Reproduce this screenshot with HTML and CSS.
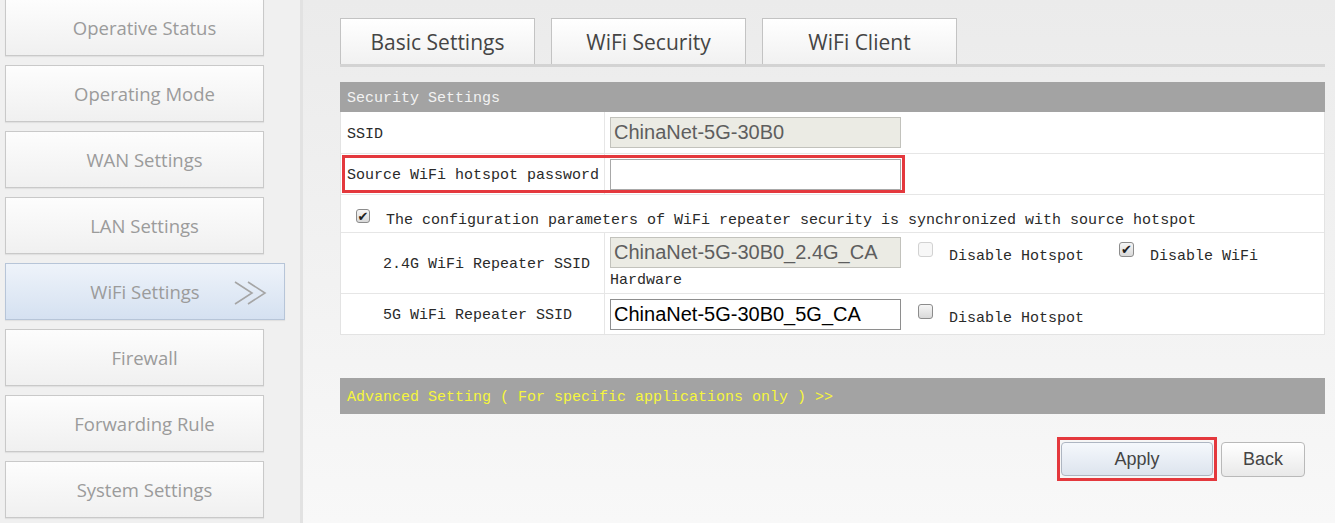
FILE: index.html
```html
<!DOCTYPE html>
<html lang="en">
<head>
  <meta charset="UTF-8">
  <meta name="viewport" content="width=device-width, initial-scale=1.0">
  <title>WiFi Settings</title>
  <link rel="stylesheet" href="styles.css">
</head>
<body>
  <div class="page">
    <!-- Side menu -->
    <nav class="sidebar">
      <a class="nav-item first">Operative Status</a>
      <a class="nav-item">Operating Mode</a>
      <a class="nav-item">WAN Settings</a>
      <a class="nav-item">LAN Settings</a>
      <a class="nav-item active">WiFi Settings
        <svg class="nav-arrow" width="36" height="26" viewBox="0 0 36 26">
          <polyline points="2,2 19,13 2,24" fill="none" stroke="#a5a5a5" stroke-width="1.6"/>
          <polyline points="15,2 32,13 15,24" fill="none" stroke="#a5a5a5" stroke-width="1.6"/>
        </svg>
      </a>
      <a class="nav-item">Firewall</a>
      <a class="nav-item">Forwarding Rule</a>
      <a class="nav-item">System Settings</a>
    </nav>

    <main class="main">
      <!-- Tabs -->
      <div class="tabs">
        <button class="tab">Basic Settings</button>
        <button class="tab">WiFi Security</button>
        <button class="tab">WiFi Client</button>
      </div>

      <div class="section-head">Security Settings</div>
      <div class="form-table">
        <div class="row r-ssid">
          <div class="label">SSID</div>
          <div class="value">
            <input class="field disabled" type="text" value="ChinaNet-5G-30B0" disabled>
          </div>
        </div>
        <div class="row r-pass">
          <div class="label">Source WiFi hotspot password</div>
          <div class="value">
            <input class="field" type="password" value="">
          </div>
          <div class="mark-box"></div>
        </div>
        <div class="row r-sync">
          <span class="check on"></span>
          <span class="text">The configuration parameters of WiFi repeater security is synchronized with source hotspot</span>
        </div>
        <div class="row r-24">
          <div class="label indent">2.4G WiFi Repeater SSID</div>
          <div class="value stack">
            <div class="line">
              <input class="field disabled" type="text" value="ChinaNet-5G-30B0_2.4G_CA" disabled>
              <span class="opt"><span class="check off-dis"></span><span class="text">Disable Hotspot</span></span>
              <span class="opt wide"><span class="check on"></span><span class="text">Disable WiFi</span></span>
            </div>
            <div class="note">Hardware</div>
          </div>
        </div>
        <div class="row r-5g">
          <div class="label indent">5G WiFi Repeater SSID</div>
          <div class="value">
            <div class="line">
              <input class="field dark" type="text" value="ChinaNet-5G-30B0_5G_CA">
              <span class="opt"><span class="check off"></span><span class="text">Disable Hotspot</span></span>
            </div>
          </div>
        </div>
      </div>

      <div class="section-head advanced">Advanced Setting ( For specific applications only ) &gt;&gt;</div>

      <div class="actions">
        <span class="mark-wrap"><button class="btn primary">Apply</button></span>
        <button class="btn">Back</button>
      </div>
    </main>
  </div>
</body>
</html>
```

FILE: styles.css
```css
* {
  box-sizing: border-box;
}

body {
  margin: 0;
  width: 1335px;
  height: 523px;
  overflow: hidden;
  background: #f0f0f0;
  font-family: "Liberation Mono", monospace;
}

.page {
  display: flex;
  height: 523px;
}

/* Side menu */
.sidebar {
  width: 303px;
  flex-shrink: 0;
  padding-left: 5px;
  background: #f0f0f0;
  border-right: 3px solid #e2e2e2;
  display: flex;
  flex-direction: column;
  gap: 9px;
}

.nav-item {
  position: relative;
  display: flex;
  align-items: center;
  justify-content: center;
  width: 259px;
  height: 57px;
  flex-shrink: 0;
  padding-left: 20px;
  background: linear-gradient(#fdfdfd, #f0f0f0);
  border: 1px solid #c9c9c9;
  box-shadow: 0 1px 1px rgba(0, 0, 0, 0.06);
  font-family: "Open Sans", sans-serif;
  font-size: 18.5px;
  color: #9b9b9b;
}

.nav-item.first {
  margin-top: -1px;
}

.nav-item.active {
  width: 280px;
  padding-right: 20px;
  background: linear-gradient(#eef3fa, #d5e1f1);
  border-color: #b7c5d8;
}

.nav-arrow {
  position: absolute;
  right: 15px;
  top: 16px;
}

/* Main panel */
.main {
  flex: 1;
  padding: 18px 10px 0 37px;
  background: linear-gradient(#ebebeb, #f8f8f8);
}

.tabs {
  display: flex;
  gap: 16px;
  border-bottom: 3px solid #d3d3d3;
}

.tab {
  width: 195px;
  height: 46px;
  background: linear-gradient(#ffffff, #f1f1f1);
  border: 1px solid #c3c3c3;
  border-bottom: none;
  font-family: "Open Sans", sans-serif;
  font-size: 21px;
  color: #454545;
  padding: 0;
}

.section-head {
  height: 30px;
  margin-top: 15px;
  padding-left: 7px;
  line-height: 34px;
  background: #a3a3a3;
  color: #f2f2f2;
  font-size: 15px;
}

.section-head.advanced {
  height: 36px;
  line-height: 40px;
  margin-top: 43px;
  color: #f6f63c;
}

.form-table {
  background: #ffffff;
  border: 1px solid #e3e3e3;
  border-top: none;
}

.row {
  position: relative;
  display: flex;
  border-bottom: 1px solid #e6e6e6;
  font-size: 15px;
  color: #2a2a2a;
}

.row:last-child {
  border-bottom: none;
}

.r-ssid { height: 42px; }
.r-pass { height: 41px; }
.r-sync { height: 38px; align-items: center; padding: 5px 0 0 15px; }
.r-24 { height: 61px; }
.r-5g { height: 40px; }

.r-sync .text {
  padding-top: 8px;
}

.label {
  width: 264px;
  flex-shrink: 0;
  display: flex;
  align-items: center;
  padding: 3px 0 0 6px;
  border-right: 1px solid #e6e6e6;
  white-space: nowrap;
}

.label.indent {
  padding-left: 42px;
}

.value {
  flex: 1;
  display: flex;
  align-items: center;
  padding-left: 5px;
}

.value.stack {
  flex-direction: column;
  align-items: flex-start;
  padding-top: 4px;
}

.line {
  display: flex;
  align-items: center;
}

.note {
  margin-top: 4px;
  line-height: 18px;
}

.field {
  width: 291px;
  height: 31px;
  padding: 0 3px;
  border: 1px solid #a8a8a8;
  background: #ffffff;
  font-family: "Liberation Sans", Arial, sans-serif;
  font-size: 20px;
  color: #000000;
  outline: none;
}

.field.disabled {
  background: #ebebe4;
  border-color: #c2c2bc;
  color: #5e5e5e;
}

.field.dark {
  border-color: #8e8e8e;
}

.opt {
  display: flex;
  align-items: center;
  margin-left: 17px;
  white-space: nowrap;
}

.opt.wide {
  margin-left: 35px;
}

.opt .check {
  margin-right: 16px;
  margin-bottom: 6px;
}

.opt .text {
  padding-top: 8px;
}

.check {
  display: inline-flex;
  align-items: center;
  justify-content: center;
  flex-shrink: 0;
  width: 15px;
  height: 15px;
  border: 1px solid #8c8c8c;
  border-radius: 3px;
  background: linear-gradient(#f6f6f6, #d9d9d9);
  font-family: "DejaVu Sans", sans-serif;
  font-size: 13px;
  font-weight: bold;
  line-height: 1;
  color: #1e1e1e;
}

.check.on::after {
  content: "\2714";
}

.r-sync .check {
  width: 14px;
  height: 14px;
  margin-right: 16px;
}

.check.off-dis {
  border-color: #d2d2d2;
  background: #f7f7f7;
}

.mark-box {
  position: absolute;
  left: 1px;
  top: 1px;
  width: 563px;
  height: 38px;
  border: 3px solid #e4383d;
  pointer-events: none;
}

/* Buttons */
.actions {
  display: flex;
  justify-content: flex-end;
  align-items: center;
  gap: 4px;
  padding-right: 20px;
  margin-top: 23px;
}

.mark-wrap {
  display: flex;
  padding: 2px 1px 2px 1px;
  border: 3px solid #e4383d;
}

.btn {
  height: 35px;
  border: 1px solid #b9b9b9;
  border-radius: 4px;
  background: linear-gradient(#ffffff, #e9e9e9);
  font-family: "Liberation Sans", Arial, sans-serif;
  font-size: 18px;
  color: #444444;
  width: 84px;
  padding: 0;
}

.btn.primary {
  width: 152px;
  height: 34px;
  border-color: #aeb6c2;
  background: linear-gradient(#f5f8fc, #dde4ee);
}
```
